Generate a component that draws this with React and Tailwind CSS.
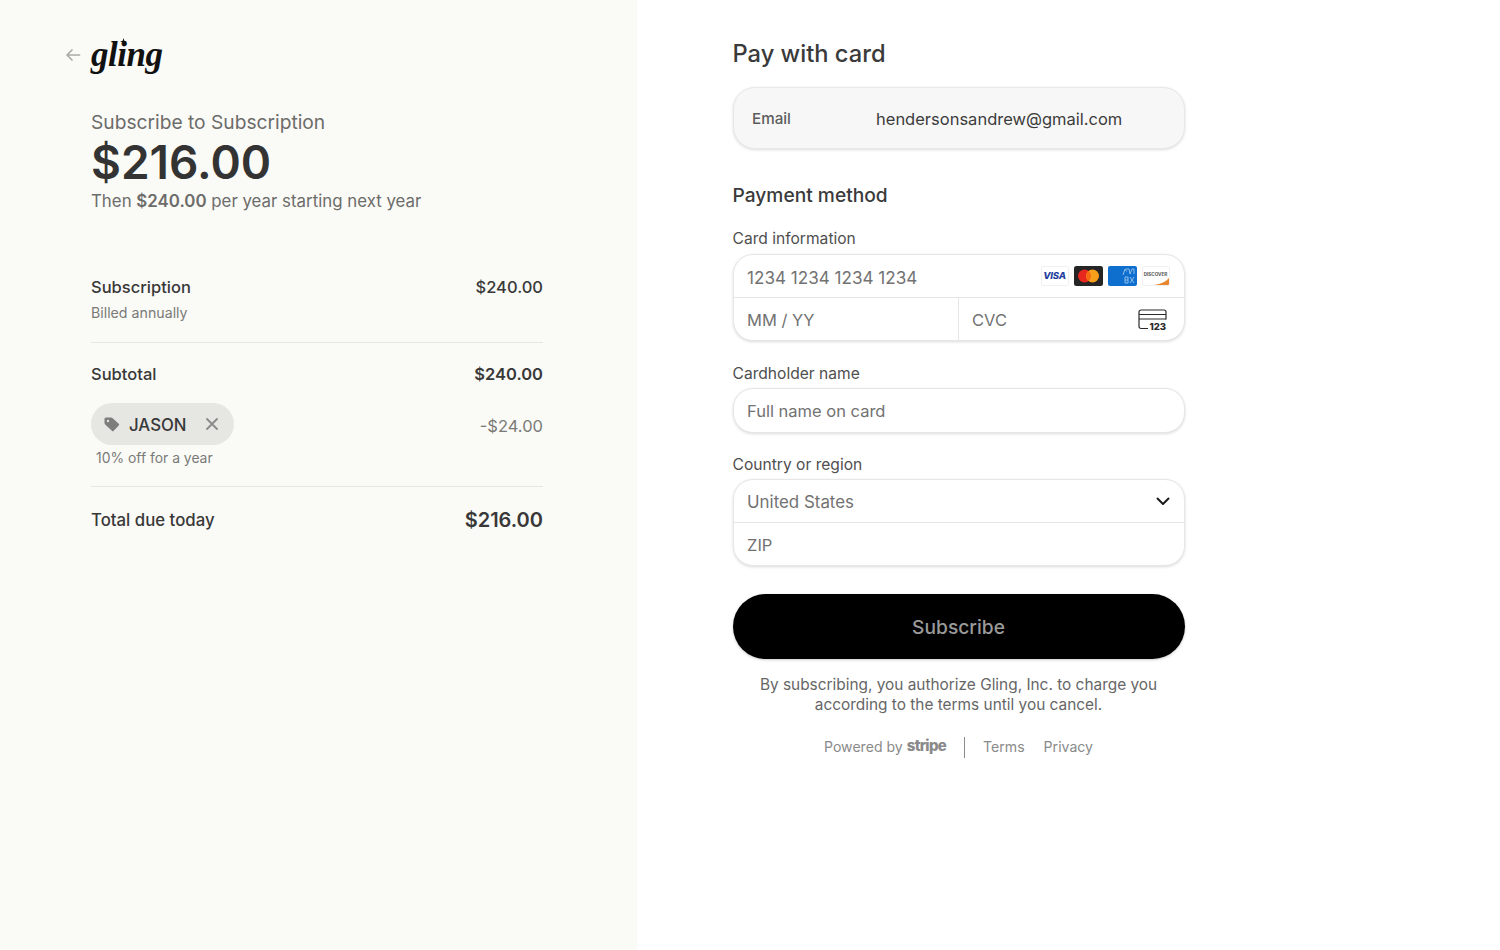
import React from "react";

const inter = "font-['Inter',sans-serif]";

function Row({ left, right, leftCls = "", rightCls = "" }) {
  return (
    <div className="flex items-center justify-between">
      <span className={leftCls}>{left}</span>
      <span className={rightCls}>{right}</span>
    </div>
  );
}

function Visa() {
  return (
    <span className="flex h-[20px] w-[28px] items-center justify-center rounded-[2px] border border-[#f0f0f0] bg-white">
      <span className="text-[9.5px] font-extrabold italic leading-none tracking-[-0.2px] text-[#1f3f9e]">VISA</span>
    </span>
  );
}
function Master() {
  return (
    <svg width="29" height="20" viewBox="0 0 29 20">
      <rect width="29" height="20" rx="2.5" fill="#252525" />
      <circle cx="10.5" cy="10" r="6.5" fill="#e8271f" />
      <circle cx="18.5" cy="10" r="6.5" fill="#f79e1b" />
      <path d="M14.5 4.9a6.5 6.5 0 0 1 0 10.2a6.5 6.5 0 0 1 0-10.2z" fill="#f46a12" />
    </svg>
  );
}
function Amex() {
  return (
    <svg width="29" height="20" viewBox="0 0 29 20">
      <rect width="29" height="20" rx="2" fill="#0f6fce" />
      <g fill="none" stroke="#a9cff2" strokeWidth="0.8">
        <path d="M15 9l2-6 1.6 2.5" />
        <path d="M18 3h3l1 5 2-5h2v5" />
        <path d="M20 17v-6h-3v6h3M17 14h3" />
        <path d="M22 11l4 6M26 11l-4 6" />
      </g>
    </svg>
  );
}
function Discover() {
  return (
    <span className="relative flex h-[20px] w-[28px] items-center justify-center overflow-hidden rounded-[2px] border border-[#f0f0f0] bg-white">
      <span className="mb-[2px] text-[4.6px] font-bold leading-none text-[#555]">DISCOVER</span>
      <svg className="absolute bottom-0 right-0" width="18" height="7" viewBox="0 0 18 7">
        <path d="M18 0v7H3C10 6 15 3.5 18 0z" fill="#e8872d" />
      </svg>
    </span>
  );
}
function CvcIcon() {
  return (
    <svg width="29" height="22" viewBox="0 0 29 22" fill="none">
      <path d="M10 19.5H3a2 2 0 0 1-2-2V3a2 2 0 0 1 2-2h23a2 2 0 0 1 2 2v7.5" stroke="#2a2a2a" strokeWidth="1.2" />
      <path d="M1 5.5h27M1 10h27" stroke="#2a2a2a" strokeWidth="1" />
      <rect x="10.5" y="12" width="18.5" height="10" fill="#fff" />
      <text x="11.5" y="21" fontSize="9.6" fontWeight="800" fill="#2a2a2a" fontFamily="Inter, sans-serif">123</text>
    </svg>
  );
}

const field = "flex h-[42px] items-center pl-[13.5px] pr-[14px] pt-[1px] text-[16.5px] text-[#727272]";
const box = "overflow-hidden rounded-[20px] border border-[#e6e6e6] bg-white shadow-[0_1px_3px_rgba(0,0,0,0.14)]";
const label = "text-[15.6px] leading-[20px] text-[#4f4f4f]";
const rowText = "text-[16.5px] leading-[24px] font-medium text-[#383838]";

export default function App() {
  return (
    <div className={`${inter} flex min-h-[950px] w-full bg-white text-[#2e2e2e]`}>
      <aside className="w-[637px] shrink-0 bg-[#fafaf6] pl-[91px] pr-[94px]">
        <header className="relative mt-[37px] flex h-[34px] items-center">
          <svg className="absolute -left-[26px] top-[10px]" width="16" height="16" viewBox="0 0 16 16" fill="none" stroke="#ababa8" strokeWidth="1.7" strokeLinecap="round" strokeLinejoin="round">
            <path d="M14.5 8H2M7 3 2 8l5 5" />
          </svg>
          <span className="relative font-['Liberation_Serif',serif] text-[35px] font-bold italic leading-none tracking-[-0.5px] text-[#111]">
            gling
            <svg className="absolute left-[29px] top-[1px]" width="7" height="7" viewBox="0 0 7 7" fill="#111">
              <path d="M3.5 0l.8 2.7L7 3.5l-2.7.8L3.5 7l-.8-2.7L0 3.5l2.7-.8z" />
            </svg>
          </span>
        </header>

        <p className="mt-[38px] text-[19.2px] leading-[26px] text-[#6c6c6a]">Subscribe to Subscription</p>
        <p className="mt-[2px] text-[46px] font-semibold leading-[50px] text-[#333]">$216.00</p>
        <p className="mt-[2px] text-[16.85px] leading-[24px] text-[#6c6c6a]">
          Then <span className="font-semibold">$240.00</span> per year starting next year
        </p>

        <div className="mt-[62px] border-b border-[#e5e5e3] pb-[19px]">
          <Row left="Subscription" right="$240.00" leftCls={rowText} rightCls={rowText} />
          <p className="mt-[4px] text-[14.2px] leading-[20px] text-[#7a7a78]">Billed annually</p>
        </div>

        <div className="border-b border-[#e5e5e3] pb-[18px] pt-[19px]">
          <Row left="Subtotal" right="$240.00" leftCls={rowText} rightCls="text-[16.5px] font-semibold leading-[24px] text-[#383838]" />
          <div className="mt-[17px] flex items-center justify-between">
            <span className="flex h-[42px] w-[143px] items-center rounded-full bg-[#e6e6e3] pl-[13px]">
              <svg width="16" height="15" viewBox="0 0 16 15" fill="#7d7d7b">
                <path d="M.5 2A1.5 1.5 0 0 1 2 .5h5a2 2 0 0 1 1.4.6l6.3 5.6a1.2 1.2 0 0 1 0 1.8l-5 5.2a1.2 1.2 0 0 1-1.8 0L1.2 7.4A2 2 0 0 1 .5 6zM4 2.8a1.2 1.2 0 1 0 0 2.4 1.2 1.2 0 0 0 0-2.4z" fillRule="evenodd" />
              </svg>
              <span className="ml-[9px] pt-[3px] text-[16.8px] font-medium text-[#383838]">JASON</span>
              <svg className="ml-[19px]" width="12" height="12" viewBox="0 0 12 12" stroke="#8a8a88" strokeWidth="1.8" strokeLinecap="round">
                <path d="M1 1l10 10M11 1 1 11" />
              </svg>
            </span>
            <span className="mt-[4px] text-[16.5px] text-[#7a7a78]">-$24.00</span>
          </div>
          <p className="ml-[5px] mt-[3px] text-[13.9px] leading-[20px] text-[#7a7a78]">10% off for a year</p>
        </div>

        <div className="pt-[19px]">
          <Row left="Total due today" right="$216.00" leftCls="pt-[1px] text-[16.8px] font-medium leading-[26px] text-[#383838]" rightCls="text-[20px] font-semibold leading-[26px] text-[#383838]" />
        </div>
      </aside>

      <main className="flex-1 pl-[95.5px]">
        <div className="w-[452px]">
          <h1 className="mt-[37px] text-[23.7px] font-medium leading-[34px] text-[#3a3a3a]">Pay with card</h1>

          <div className="mt-[16px] flex h-[62px] items-center rounded-[22px] border border-[#e8e8e8] bg-[#f7f7f7] pl-[18.5px] pt-[2px] shadow-[0_1px_3px_rgba(0,0,0,0.14)]">
            <span className="w-[124px] text-[15.2px] font-medium text-[#5c5c5c]">Email</span>
            <span className="text-[16.5px] text-[#3c3c3c]">hendersonsandrew@gmail.com</span>
          </div>

          <h2 className="mt-[33px] text-[19.2px] font-medium leading-[26px] text-[#3a3a3a]">Payment method</h2>

          <p className={`mt-[21px] ${label}`}>Card information</p>
          <div className={`mt-[5px] ${box}`}>
            <div className={`${field} justify-between`}>
              <span className="mt-[2px] text-[17.1px]">1234 1234 1234 1234</span>
              <span className="mb-[1px] flex items-center gap-[5px]"><Visa /><Master /><Amex /><Discover /></span>
            </div>
            <div className="flex border-t border-[#e6e6e6]">
              <div className={`${field} w-[225px] border-r border-[#e6e6e6] pt-[3px]`}>MM / YY</div>
              <div className={`${field} flex-1 justify-between pr-[17px]`}>
                <span className="mt-[2px]">CVC</span>
                <CvcIcon />
              </div>
            </div>
          </div>

          <p className={`mt-[23px] ${label}`}>Cardholder name</p>
          <div className={`mt-[4px] ${box}`}>
            <div className={`${field} h-[43px]`}>Full name on card</div>
          </div>

          <p className={`mt-[22px] ${label}`}>Country or region</p>
          <div className={`mt-[4px] ${box}`}>
            <div className={`${field} justify-between text-[#383838]`}>
              <span className="mt-[3px] text-[16.9px]">United States</span>
              <svg width="14" height="9" viewBox="0 0 14 9" fill="none" stroke="#1c1c1c" strokeWidth="2" strokeLinecap="round" strokeLinejoin="round">
                <path d="M1.5 1.5 7 7l5.5-5.5" />
              </svg>
            </div>
            <div className={`${field} h-[43px] border-t border-[#e6e6e6] pt-[3px]`}>ZIP</div>
          </div>

          <button className="mt-[28px] flex h-[65px] w-full items-center justify-center rounded-full bg-black pt-[2px] text-[19.2px] font-medium text-[#9a9a9a] shadow-[0_1px_3px_rgba(0,0,0,0.2)]">
            Subscribe
          </button>

          <p className="mt-[16px] text-center text-[15.4px] leading-[20px] text-[#666]">
            By subscribing, you authorize Gling, Inc. to charge you<br />according to the terms until you cancel.
          </p>

          <div className="mt-[20px] flex h-[24px] items-center justify-center text-[14.1px] text-[#8a8a8a]">
            <span>Powered by</span>
            <span className="mb-[2px] ml-[4px] text-[15px] font-extrabold tracking-[-0.7px] text-[#8a8a8a]">stripe</span>
            <span className="mx-[18px] h-[21px] w-px bg-[#8a8a8a]" />
            <span>Terms</span>
            <span className="ml-[19px]">Privacy</span>
          </div>
        </div>
      </main>
    </div>
  );
}
